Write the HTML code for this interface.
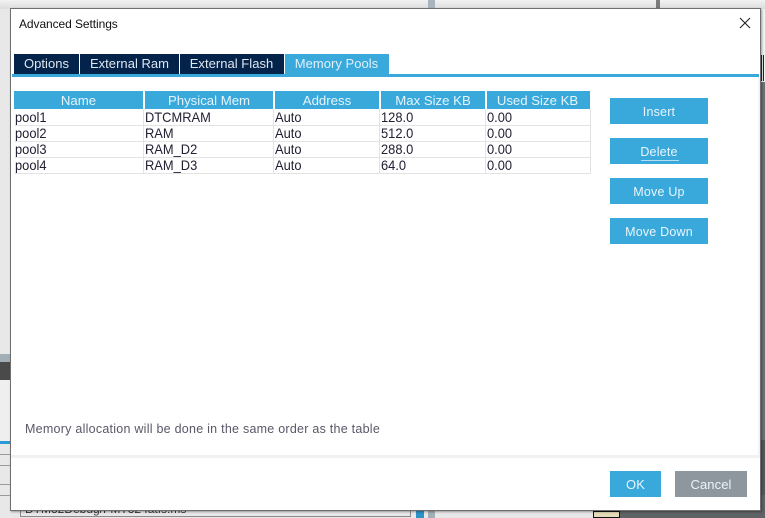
<!DOCTYPE html>
<html><head><meta charset="utf-8"><style>
html,body{margin:0;padding:0}
body{width:765px;height:518px;overflow:hidden;position:relative;background:#e8e8e8;font-family:"Liberation Sans",sans-serif}
div,span{position:absolute;box-sizing:border-box}
.t{white-space:nowrap;line-height:16px}
.tab{top:54px;height:20px;background:#04234b;color:#dfe6ee;font-size:13px;line-height:19px;text-align:center;letter-spacing:.03px}
.h{top:91px;height:18px;background:#39a9dc;color:#e6f4fb;font-size:13.2px;line-height:19px;text-align:center}
.c{font-size:14px;color:#222033;line-height:16px;white-space:nowrap;transform:scaleX(.92);transform-origin:0 0}
.hl{left:14px;width:577px;height:1px;background:#e3e3e3}
.vl{top:109px;width:1px;height:65px;background:#e3e3e3}
.b{left:610px;width:98px;height:26px;background:#39a9dc;color:#e9f5fb;font-size:12.5px;line-height:28px;text-align:center;letter-spacing:.2px}
</style></head><body>
<div style="left:0;top:0;width:765px;height:9px;background:linear-gradient(#f2f2f2,#dcdcdc)"></div>
<div style="left:428px;top:0;width:7px;height:9px;background:#a8b5bf"></div>
<div style="left:656px;top:0;width:4px;height:8px;background:#333;opacity:.6"></div>
<div style="left:0;top:354px;width:11px;height:8px;background:#a3afb6"></div>
<div style="left:0;top:362px;width:11px;height:18px;background:#4a4a4a"></div>
<div style="left:0;top:380px;width:11px;height:62px;background:#efefef"></div>
<div style="left:0;top:441px;width:11px;height:3px;background:#2a9bd6"></div>
<div style="left:0;top:454px;width:11px;height:1px;background:#9a9a9a"></div>
<div style="left:0;top:465px;width:11px;height:1px;background:#9a9a9a"></div>
<div style="left:0;top:484px;width:11px;height:1px;background:#9a9a9a"></div>
<div style="left:0;top:495px;width:11px;height:1px;background:#9a9a9a"></div>
<div style="left:20px;top:505px;width:391px;height:12px;border:1px solid #8a8a8a;border-top:0"></div>
<div class="t" style="left:25px;top:501px;font-size:12px;color:#333">DTM32Debug/FMT32 fatfs.ms</div>
<div style="left:416px;top:510px;width:8px;height:8px;background:#2a93c8"></div>
<div style="left:428px;top:510px;width:7px;height:8px;background:#a3afb6"></div>
<div style="left:593px;top:510px;width:27px;height:8px;background:#e4dcb8;border:1px solid #111;border-top:2px solid #111"></div>
<div style="left:620px;top:510px;width:145px;height:8px;background:#5f6366"></div>
<div style="left:761px;top:9px;width:4px;height:73px;background:#f2f2f2"></div>
<div style="left:761px;top:55px;width:3px;height:26px;border-left:1px solid #222;border-right:1px solid #222"></div>
<div style="left:761px;top:82px;width:4px;height:358px;background:#6d7174"></div>
<div style="left:761px;top:440px;width:4px;height:55px;background:#55585a"></div>
<div style="left:761px;top:495px;width:4px;height:23px;background:#5f6366"></div>

<div style="left:10px;top:8px;width:751px;height:503px;background:#fff;border:1px solid #6f6f6f;box-shadow:1px 1px 2px rgba(0,0,0,.35)"></div>
<div style="left:758px;top:77px;width:2px;height:379px;background:#f1f3f5"></div>
<div class="t" style="left:19px;top:16px;font-size:12px;color:#111;letter-spacing:-.08px">Advanced Settings</div>
<svg style="position:absolute;left:739px;top:17px" width="12" height="12" viewBox="0 0 12 12"><path d="M1 1L11 11M11 1L1 11" stroke="#222" stroke-width="1.1" fill="none"/></svg>

<div class="tab" style="left:14px;width:65px">Options</div>
<div class="tab" style="left:80px;width:99px">External Ram</div>
<div class="tab" style="left:180px;width:104px;padding-right:1px">External Flash</div>
<div class="tab" style="left:285px;width:104px;padding-right:1px;background:#39a9dc;color:#e0f1fa">Memory Pools</div>
<div style="left:12px;top:74px;width:747px;height:3px;background:#39a9dc"></div>

<div class="h" style="left:14px;width:129px">Name</div>
<div class="h" style="left:145px;width:128px">Physical Mem</div>
<div class="h" style="left:275px;width:104px">Address</div>
<div class="h" style="left:381px;width:104px">Max Size KB</div>
<div class="h" style="left:487px;width:103px;padding-right:2px">Used Size KB</div>

<div class="hl" style="top:125px"></div><div class="hl" style="top:141px"></div><div class="hl" style="top:157px"></div><div class="hl" style="top:173px"></div>
<div class="vl" style="left:143px"></div><div class="vl" style="left:273px"></div><div class="vl" style="left:379px"></div><div class="vl" style="left:485px"></div><div class="vl" style="left:590px"></div>

<div class="c" style="left:15px;top:109px">pool1</div><div class="c" style="left:145px;top:109px">DTCMRAM</div><div class="c" style="left:275px;top:109px">Auto</div><div class="c" style="left:381px;top:109px">128.0</div><div class="c" style="left:487px;top:109px">0.00</div>
<div class="c" style="left:15px;top:125px">pool2</div><div class="c" style="left:145px;top:125px">RAM</div><div class="c" style="left:275px;top:125px">Auto</div><div class="c" style="left:381px;top:125px">512.0</div><div class="c" style="left:487px;top:125px">0.00</div>
<div class="c" style="left:15px;top:141px">pool3</div><div class="c" style="left:145px;top:141px">RAM_D2</div><div class="c" style="left:275px;top:141px">Auto</div><div class="c" style="left:381px;top:141px">288.0</div><div class="c" style="left:487px;top:141px">0.00</div>
<div class="c" style="left:15px;top:157px">pool4</div><div class="c" style="left:145px;top:157px">RAM_D3</div><div class="c" style="left:275px;top:157px">Auto</div><div class="c" style="left:381px;top:157px">64.0</div><div class="c" style="left:487px;top:157px">0.00</div>

<div class="b" style="top:98px">Insert</div>
<div class="b" style="top:138px">Delete</div>
<div style="left:641px;top:160px;width:38px;height:1px;background:#b5dcef"></div>
<div class="b" style="top:178px">Move Up</div>
<div class="b" style="top:218px">Move Down</div>

<div class="t" style="left:25px;top:421px;font-size:12.5px;color:#5a5768;letter-spacing:.25px">Memory allocation will be done in the same order as the table</div>
<div style="left:11px;top:455px;width:749px;height:3px;background:#f1f1f1"></div>
<div class="b" style="left:610px;top:471px;width:51px;font-size:13px;letter-spacing:.1px">OK</div>
<div class="b" style="left:675px;top:471px;width:72px;background:#8f979e;font-size:13px;letter-spacing:.1px">Cancel</div>
</body></html>
